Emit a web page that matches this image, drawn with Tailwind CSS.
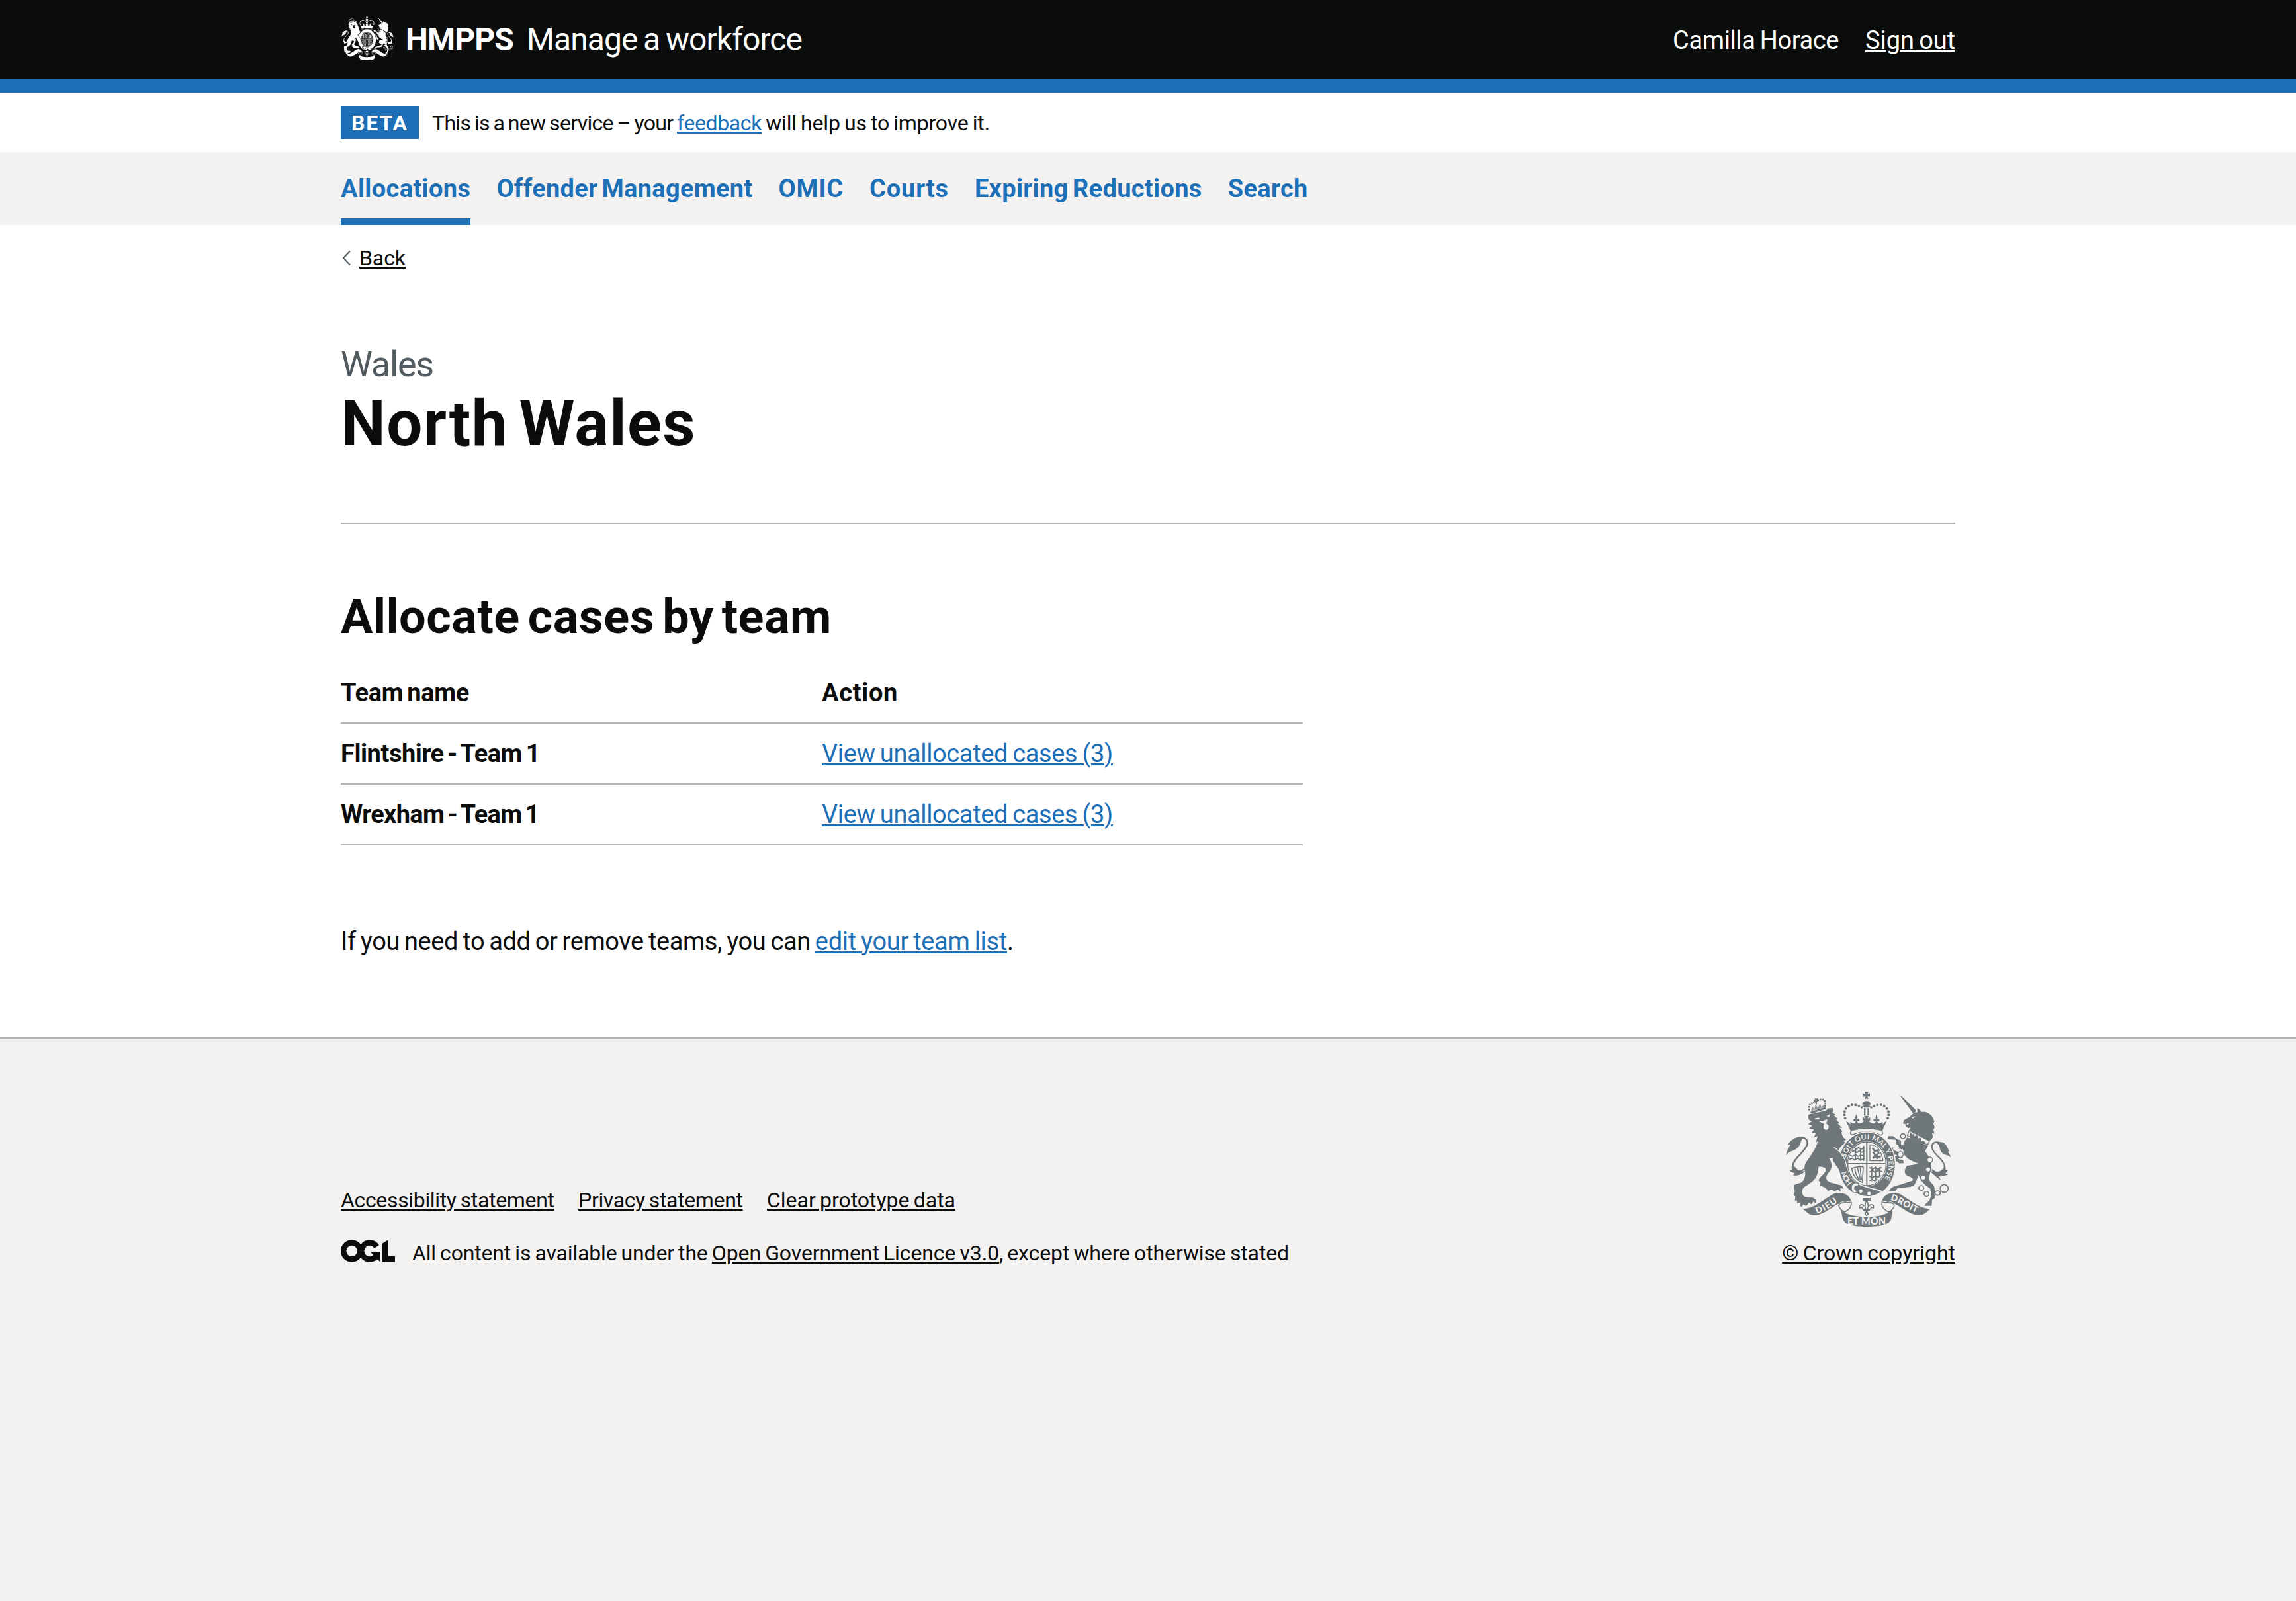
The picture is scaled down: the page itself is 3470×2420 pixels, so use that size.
<!DOCTYPE html>
<html lang="en">
<head>
<meta charset="utf-8">
<title>North Wales - Manage a workforce</title>
<script src="https://cdn.jsdelivr.net/npm/@tailwindcss/browser@4"></script>
</head>
<body class="bg-[#f3f2f1] text-[#0b0c0c] font-['Roboto',sans-serif] text-[38px] leading-[50px]">
<svg class="hidden" xmlns="http://www.w3.org/2000/svg">
  <symbol id="crest" viewBox="117 60 750 612" preserveAspectRatio="none">
    <g fill="currentColor" stroke="none">
      <!-- lion -->
      <path d="M228 152L296 130L299 139L231 161Z"/>
      <path d="M232 148L238 128L246 140L252 118L262 134L272 114L278 130L292 118L293 130Z" opacity=".75"/>
      <g><circle cx="223" cy="142" r="4.500"/><circle cx="222" cy="130" r="4.500"/><circle cx="226" cy="119" r="4.500"/><circle cx="235" cy="113" r="4.500"/><circle cx="244" cy="111" r="4"/><circle cx="264" cy="99" r="4"/><circle cx="274" cy="95" r="4.500"/><circle cx="285" cy="96" r="4.500"/><circle cx="293" cy="103" r="4.500"/><circle cx="296" cy="114" r="4.500"/><circle cx="296" cy="125" r="4.500"/><path d="M247 88l8 4 6-3 2 14-6 4 2 10-6 2-4-12-7-2 2-8 6 0z"/></g>
      <path d="M218 178L219 165L300 146L306 137L330 134L332 150L328 155L344 166L335 168L352 184L345 186L360 203L352 204L372 224L360 224L374 240L369 244C372 262 378 270 391 278L378 284L388 292L372 303L360 318C352 330 358 338 368 344C384 358 392 385 394 408L385 420L374 414L360 416L362 404L352 406L354 396L342 396L352 384L340 386L352 376L330 378L345 366L330 360L314 364C328 385 328 410 312 426C300 440 296 455 306 464C320 476 338 474 356 482L372 486L378 500L364 497L366 512L350 504L340 513L325 505L308 510C300 494 284 492 272 486L274 470L265 462C272 445 288 438 298 420C302 408 292 402 266 400C262 425 262 445 240 465C222 482 200 488 192 505C188 522 196 538 212 540L240 541L254 552L252 566L240 558L236 572L222 564L210 578L196 572L190 582L180 578L182 562L170 568L166 552L158 556L160 535L153 530L158 510L153 500L154 486C162 474 180 480 192 468C206 452 208 430 202 412C198 390 215 372 230 350C246 325 258 305 262 285L252 290L262 262L245 268L252 248L232 250L244 232L222 228L236 214L218 208L234 196L222 188Z"/>
      <path d="M196 266C168 260 140 276 126 302L138 300C130 315 122 325 117 350C126 335 138 332 152 326C172 318 184 302 186 284Z"/>
      <path d="M180 270C200 264 216 275 215 296C210 330 150 360 147 402C147 420 165 432 202 412" fill="none" stroke="currentColor" stroke-width="8"/>
      <path d="M152 395L148 412L134 416C142 430 154 426 158 430L150 440C172 442 190 436 205 420L180 424Z"/>
      <!-- unicorn -->
      <path d="M633 75L642 80L710 148L694 160Z"/>
      <path d="M712 135L722 140L732 152L748 152C772 158 786 176 790 196L786 206L792 222L786 232L791 252L780 246L784 266L776 278L762 288L676 238L682 222C668 232 655 214 660 208L648 205L652 190L676 176L698 156L714 154Z"/>
      <path d="M668 268L762 306L748 330C758 345 772 358 776 386C782 410 764 436 768 462C776 478 792 482 791 500L793 542L780 552L778 578L745 578L752 568L768 554L776 530L772 500C755 490 730 470 718 438C712 452 708 478 694 488C670 496 640 494 624 497L612 512L584 512L590 500L610 488C640 482 668 470 690 464C698 456 690 450 668 442C650 434 655 405 668 396C685 392 705 392 716 386C690 375 660 365 652 340C644 310 650 285 668 268Z"/>
      <path d="M660 322C645 322 620 318 608 314L590 312L580 318L598 326L608 334L602 316L632 316L622 292L614 278L590 276L578 274L582 262L602 262L626 278L640 300L660 306Z"/>
      <path d="M652 344L618 330L596 322L600 338L622 350L606 358L604 372L622 378L632 386L652 384L648 370L626 366L638 352Z"/>
      <path d="M798 290C820 284 842 292 850 315L858 330L852 332L867 360C852 344 838 350 826 338C812 325 816 305 808 300Z"/>
      <path d="M822 300C808 282 778 288 779 312C782 345 836 365 838 405C838 428 812 442 778 414" fill="none" stroke="currentColor" stroke-width="7"/>
      <path d="M834 398L840 412L852 416L840 432L852 436C835 445 820 440 812 446L820 462C800 450 788 436 772 422L800 424C816 424 830 414 834 398Z"/>
      <g fill="none" stroke="currentColor" stroke-width="5"><circle cx="648" cy="262" r="11"/><circle cx="628" cy="290" r="9"/><circle cx="731" cy="497" r="11"/><circle cx="755" cy="524" r="11"/><ellipse cx="805" cy="520" rx="12" ry="10"/><circle cx="835" cy="499" r="18"/></g>
      <!-- crown -->
      <path d="M474 60H491L488 71L498 67V84L488 80L491 92H474L477 80L466 84V67L477 71Z"/>
      <path d="M463 118A20 20 0 0 1 502 118Q483 128 463 118Z"/><ellipse cx="482.500" cy="127" rx="18" ry="6"/>
      <g id="beads"><circle cx="386" cy="181" r="6"/><circle cx="382" cy="166" r="6"/><circle cx="383" cy="151" r="6"/><circle cx="390" cy="137" r="6"/><circle cx="402" cy="126" r="6"/><circle cx="417" cy="120" r="6"/><circle cx="433" cy="121" r="6"/><circle cx="448" cy="125" r="6"/><circle cx="461" cy="132" r="5.500"/></g>
      <use href="#beads" transform="matrix(-1 0 0 1 965 0)"/>
      <path d="M471 136H478V168H471ZM487 136H494V168H487Z"/>
      <path d="M391 190C398 198 404 206 412 208L408 198C416 202 424 204 430 204L434 194C426 198 420 192 424 186C428 182 432 184 434 188C430 178 434 170 437 162C440 170 444 178 440 188C442 184 446 182 450 186C454 192 448 198 440 194L444 204C454 206 462 202 468 198L472 190L466 194V176L478 182L472 170H493L487 182L499 176V194L493 190L497 198C503 202 511 206 521 204L525 194C517 198 511 192 515 186C519 182 523 184 525 188C521 178 525 170 528 162C531 170 535 178 531 188C533 184 537 182 541 186C545 192 539 198 531 194L535 204C541 204 549 202 557 198L553 208C561 206 567 198 574 190C574 204 560 218 556 236C510 222 455 222 409 236C405 218 391 204 391 190Z"/>
      <path d="M414 236C455 224 510 224 552 236L556 250C550 262 545 258 535 252C505 240 460 240 430 252C418 260 412 254 410 248Z" style="fill:var(--ground)" stroke="currentColor" stroke-width="5"/>
      <!-- garter and shield -->
      <ellipse cx="484.500" cy="391" rx="132" ry="150" style="fill:var(--ground)" />
      <ellipse cx="484.500" cy="391" rx="127" ry="146"/>
      <ellipse cx="484.500" cy="387" rx="91" ry="103" style="fill:var(--ground)"/>
      <ellipse cx="484.500" cy="387" rx="87" ry="99" fill="none" stroke="currentColor" stroke-width="4"/>
      <path d="M484 286V488M396 387H572" stroke="currentColor" stroke-width="6" fill="none"/>
      <g fill="none" stroke="currentColor" stroke-width="5.500">
        <path d="M426 312l10 10 10-8 12 8 16-10M416 332l14-4 8 8 14-8 6 8 16-6M408 348l12 6 14-8 10 8 14-6 16 6M404 368l14-6 10 8 16-8 10 8 20-6M432 320v52M456 314v60M470 306v68"/>
        <path d="M496 404l14 8 12-8 12 8 18-8M496 424l14-6 10 8 16-8 20 6M496 444l14 6 12-8 12 6 14-6M496 464l12-6 10 6 14-6M506 400v66M524 400v66M542 402v46"/>
        <path d="M498 302V374H558M498 302C530 300 550 330 558 374" stroke-width="4"/>
        <path d="M510 316l10 14 14-4 4 14-12 8 14 10 8-6M512 334l10 14-10 14 16-8 4 12" stroke-width="8"/>
        <path d="M416 408C432 404 450 396 468 402L464 472C440 462 420 440 416 408ZM430 410C432 430 440 448 452 462M442 406L456 462M454 404L460 462" stroke-width="5"/>
      </g>
      <!-- lion's forepaw over the garter -->
      <path d="M334 312C362 330 392 362 394 404L384 420L358 414L330 372Z"/>
      <path d="M334 312C362 330 390 360 392 402" fill="none" style="stroke:var(--ground)" stroke-width="4"/>
      <!-- buckle -->
      <path d="M418 486L450 480C480 496 520 500 552 512C530 534 480 552 424 516Z" style="stroke:var(--ground)" stroke-width="5"/>
      <path d="M446 478C424 466 410 486 416 506C420 520 434 522 440 512L428 502C426 488 436 484 446 488Z" stroke="currentColor" stroke-width="3" style="fill:var(--ground)"/>
      <g style="fill:var(--ground)"><circle cx="457" cy="511" r="8"/><circle cx="494" cy="522" r="8"/>
        <path d="M246 184C256 178 266 176 272 182C264 188 254 188 246 184ZM300 172L318 162L314 174ZM268 196C278 194 286 198 292 190L306 186L300 204L310 214C314 228 304 238 294 232C284 226 288 214 290 206L280 202Z"/>
        <path d="M684 176L704 172L694 182ZM664 206L676 200L670 212Z"/>
        <path d="M676 236L768 284L760 302L668 260Z" stroke="currentColor" stroke-width="4"/>
        <ellipse cx="770" cy="370" rx="12" ry="13" stroke="currentColor" stroke-width="4"/><circle cx="762" cy="413" r="9"/><circle cx="740" cy="450" r="9"/><ellipse cx="637" cy="345" rx="12" ry="14" stroke="currentColor" stroke-width="4"/>
      </g>
      <path d="M680 258l2-14 8 10 8-4 2 14 8-8 8 6 0 12 8-6 8 6 0 12 8-4 8 6 2 8-10 4-62-28Z"/>
      <!-- fleur-de-lis -->
      <path d="M466 543H501V556H466Z"/>
      <path d="M483 556C470 570 478 584 479 594C470 598 462 592 462 584L452 588C446 572 466 568 472 580M483 556C496 570 488 584 487 594C496 598 504 592 504 584L514 588C520 572 500 568 494 580M468 598H498M483 600L476 616L483 622L490 616Z" fill="none" stroke="currentColor" stroke-width="5"/>
      <!-- scrolls -->
      <g id="scroll"><path d="M193 592C240 594 290 548 335 523C360 514 400 520 412 552C412 560 395 556 385 562C375 556 366 560 358 568C330 580 290 616 255 621C220 624 212 604 193 592Z"/>
      <path d="M412 556C418 580 408 592 384 606C370 600 352 584 360 570C370 560 392 566 410 562" style="fill:var(--ground)" stroke="currentColor" stroke-width="5"/></g>
      <use href="#scroll" transform="matrix(-1 0 0 1 966 0)"/>
      <path d="M366 596C390 618 430 628 483 628C536 628 576 618 600 596L594 640C586 664 540 672 483 672C426 672 384 664 376 640Z"/>
    </g>
  </symbol>
</svg>

<header class="bg-[#0b0c0c] text-white border-b-[20px] border-[#1d70b8]">
  <div class="w-[2440px] mx-auto h-[120px] flex items-center whitespace-nowrap">
    <svg class="w-[79px] h-[67px] ml-[1px] -mt-[5px] text-white [--ground:#0b0c0c]"><use href="#crest"/></svg>
    <a class="ml-[18px] text-[48px] font-bold tracking-[-0.87px]">HMPPS</a>
    <a class="ml-[20px] text-[48px] tracking-[-0.92px] [word-spacing:-0.05em]">Manage a workforce</a>
    <div class="ml-auto pt-[2px] flex gap-[40px]">
      <span class="tracking-[-0.38px] [word-spacing:-0.05em]">Camilla Horace</span>
      <a class="underline underline-offset-[2px] decoration-[3px] tracking-[-0.09px] [word-spacing:-0.05em]">Sign out</a>
    </div>
  </div>
</header>

<div class="bg-white">
  <div class="w-[2440px] mx-auto h-[90px] flex items-center text-[32px]">
    <strong class="bg-[#1d70b8] text-white w-[118px] h-[50px] pl-[16px] leading-[52px] mr-[20px] tracking-[1.9px]">BETA</strong>
    <p class="pt-[2px] [word-spacing:-0.05em]"><span class="tracking-[-0.69px]">This is a new service – your </span><a class="text-[#1d70b8] underline underline-offset-[2px] decoration-[3px] tracking-[-0.38px]">feedback</a><span class="tracking-[-0.17px]"> will help us to improve it.</span></p>
  </div>
</div>

<nav class="bg-[#f3f2f1]">
  <div class="w-[2440px] mx-auto h-[110px] flex gap-[39px] font-bold text-[#1d70b8] leading-[111px] [word-spacing:-0.09em]">
    <a class="border-b-[10px] border-[#1d70b8] tracking-[0.36px]">Allocations</a>
    <a class="tracking-[0.28px]">Offender Management</a>
    <a class="tracking-[0.78px]">OMIC</a>
    <a class="tracking-[0.85px]">Courts</a>
    <a class="tracking-[0.32px]">Expiring Reductions</a>
    <a class="tracking-[0.35px]">Search</a>
  </div>
</nav>

<main class="bg-white h-[1228px]">
  <div class="w-[2440px] mx-auto pt-[25px]">
    <a class="flex items-center text-[32px] h-[50px]"><svg class="w-[16px] h-[24px] mr-[12px]" viewBox="0 0 16 24"><path d="M14 1.500L4 12L14 22.500" fill="none" stroke="#505a5f" stroke-width="2"/></svg><span class="underline underline-offset-[2px] decoration-[3px] tracking-[-0.08px]">Back</span></a>
    <h1 class="mt-[105px]">
      <span class="block text-[54px] leading-[61px] text-[#505a5f] tracking-[-1.21px]">Wales</span>
      <span class="block mt-[9px] text-[96px] leading-[100px] font-bold tracking-[1.43px] [word-spacing:-0.09em]">North Wales</span>
    </h1>
    <hr class="mt-[100px] border-0 h-[2px] bg-[#b1b4b6]">
    <h2 class="mt-[101px] text-[72px] leading-[80px] font-bold tracking-[0.54px] [word-spacing:-0.09em]">Allocate cases by team</h2>
    <table class="mt-[28px] w-[1454px] table-fixed border-collapse text-left">
      <thead>
        <tr class="h-[92px] border-b-[2px] border-[#b1b4b6] font-bold"><th class="tracking-[-0.3px] [word-spacing:-0.09em]">Team name</th><th class="tracking-[0.67px]">Action</th></tr>
      </thead>
      <tbody>
        <tr class="h-[92px] border-b-[2px] border-[#b1b4b6]"><th class="tracking-[-0.45px] [word-spacing:-0.09em]">Flintshire - Team 1</th><td><a class="text-[#1d70b8] underline underline-offset-[2px] decoration-[3px] tracking-[-0.37px] [word-spacing:-0.05em]">View unallocated cases (3)</a></td></tr>
        <tr class="h-[92px] border-b-[2px] border-[#b1b4b6]"><th class="tracking-[-0.64px] [word-spacing:-0.09em]">Wrexham - Team 1</th><td><a class="text-[#1d70b8] underline underline-offset-[2px] decoration-[3px] tracking-[-0.37px] [word-spacing:-0.05em]">View unallocated cases (3)</a></td></tr>
      </tbody>
    </table>
    <p class="mt-[120px] [word-spacing:-0.05em]"><span class="tracking-[-0.41px]">If you need to add or remove teams, you can </span><a class="text-[#1d70b8] underline underline-offset-[2px] decoration-[3px] tracking-[-0.32px]">edit your team list</a>.</p>
  </div>
</main>

<footer class="border-t-[2px] border-[#b1b4b6]">
  <div class="w-[2440px] mx-auto pt-[80px] flex justify-between items-end text-[32px] [word-spacing:-0.05em]">
    <div>
      <div class="flex gap-[36.5px]">
        <a class="underline underline-offset-[2px] decoration-[3px] tracking-[-0.34px]">Accessibility statement</a>
        <a class="underline underline-offset-[2px] decoration-[3px] tracking-[-0.37px]">Privacy statement</a>
        <a class="underline underline-offset-[2px] decoration-[3px] tracking-[-0.03px]">Clear prototype data</a>
      </div>
      <div class="flex items-center mt-[30px]">
        <svg class="w-[82px] h-[34px] mr-[26px] -mt-[6px]" viewBox="21 24 246 101"><g fill="none" stroke="#0b0c0c" stroke-width="25.500"><circle cx="71" cy="74.500" r="37.500"/><path d="M184 55A37.500 37.500 0 1 0 182 97"/></g><path fill="#0b0c0c" d="M156 78H201V124L186 112L172 98ZM209 41L236 24V97H267V124H209Z"/></svg>
        <p><span class="tracking-[-0.17px]">All content is available under the </span><a class="underline underline-offset-[2px] decoration-[3px] tracking-[-0.12px]">Open Government Licence v3.0</a><span class="tracking-[-0.13px]">, except where otherwise stated</span></p>
      </div>
    </div>
    <div class="flex flex-col items-end">
      <svg class="w-[250px] h-[204px] mr-[6px] mb-[15px] text-[#6f777b] [--ground:#f3f2f1] font-[Lato,sans-serif] [word-spacing:0]" viewBox="117 60 750 612">
        <use href="#crest" x="117" y="60" width="750" height="612"/>
        <defs><path id="ring" d="M421.500 475.600A98 113 0 1 1 553.800 468.900"/><path id="dieu" d="M258 614C297 600 328 580 366 551"/><path id="droit" d="M590 551C630 562 662 590 716 613"/></defs>
        <g fill="#f3f2f1" font-weight="900">
          <text font-size="32" font-weight="700"><textPath href="#ring" startOffset="4" textLength="62">HON</textPath></text>
          <text font-size="32" font-weight="700"><textPath href="#ring" startOffset="124" textLength="372">SOIT QUI MAL Y PENSE</textPath></text>
          <text font-size="40"><textPath href="#dieu" textLength="108">DIEU</textPath></text>
          <text font-size="40"><textPath href="#droit" textLength="132">DROIT</textPath></text>
          <text x="396" y="662" font-size="43" textLength="174">ET MON</text>
        </g>
      </svg>
      <a class="underline underline-offset-[2px] decoration-[3px]">© Crown copyright</a>
    </div>
  </div>
</footer>
</body>
</html>
